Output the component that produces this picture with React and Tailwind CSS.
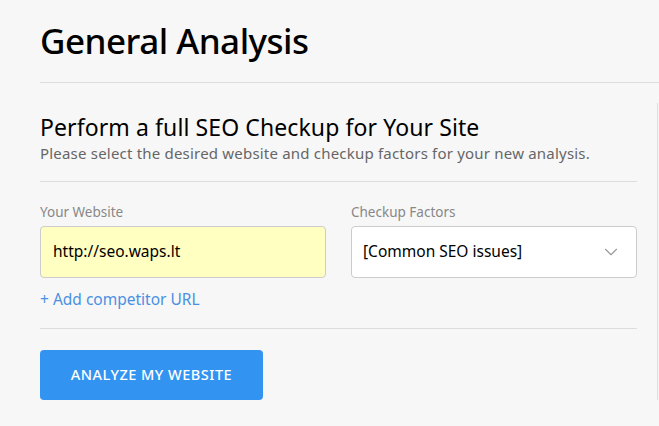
import { ChevronDown } from 'lucide-react';

export default function App() {
  return (
    <div className="h-[426px] w-full overflow-hidden bg-[#f7f7f7] font-['Noto_Sans',sans-serif] text-black">
      {/* Page header */}
      <div className="pl-10">
        <h1 className="pt-[17px] pb-[17px] text-[35px] leading-[48px] font-medium tracking-[-0.5px] border-b border-[#dddddd]">
          General Analysis
        </h1>
      </div>

      {/* Panel */}
      <div className="mt-5 mr-[1px] border-r border-[#dddddd] pl-10 pr-5 pt-[8px]">
        <h2 className="text-[23px] leading-[32px] tracking-[0.1px]">Perform a full SEO Checkup for Your Site</h2>
        <p className="text-[15px] leading-[20px] tracking-[0.2px] text-[#666666]">
          Please select the desired website and checkup factors for your new analysis.
        </p>

        <div className="mt-[18px] border-t border-[#dddddd]" />

        <div className="mt-[20px] grid grid-cols-2 gap-[25px]">
          <div>
            <label className="block text-[13.5px] leading-[20px] text-[#888888]">Your Website</label>
            <div className="mt-[4px] flex h-[52px] items-center rounded-[4px] border border-[#cccccc] bg-[#ffffc2] px-[12px] text-[15.5px]">
              http://seo.waps.lt
            </div>
            <div className="mt-[10px] text-[15.5px] leading-[22px] text-[#4a90e2]">+ Add competitor URL</div>
          </div>
          <div>
            <label className="block text-[13.5px] leading-[20px] text-[#888888]">Checkup Factors</label>
            <div className="mt-[4px] flex h-[52px] items-center justify-between rounded-[4px] border border-[#cccccc] bg-white pl-[11px] pr-[14px] text-[15.5px]">
              <span>[Common SEO issues]</span>
              <ChevronDown className="h-[22px] w-[22px] text-[#999999]" strokeWidth={1.25} />
            </div>
          </div>
        </div>

        <div className="mt-[18px] border-t border-[#dddddd]" />

        <button className="mt-[21px] h-[50px] w-[223px] rounded-[4px] bg-[#3294f0] text-[14.5px] font-medium uppercase tracking-[0.5px] text-white">
          Analyze my website
        </button>
      </div>
    </div>
  );
}
